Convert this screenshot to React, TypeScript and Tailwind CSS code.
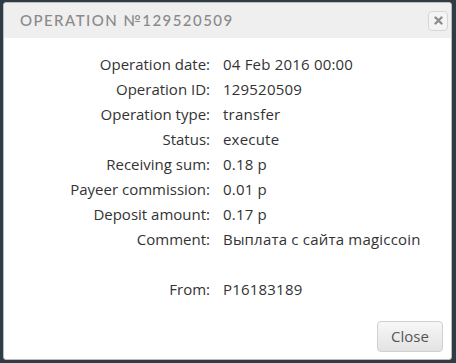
import React from "react";

const rows: [string, string][] = [
  ["Operation date:", "04 Feb 2016 00:00"],
  ["Operation ID:", "129520509"],
  ["Operation type:", "transfer"],
  ["Status:", "execute"],
  ["Receiving sum:", "0.18 р"],
  ["Payeer commission:", "0.01 р"],
  ["Deposit amount:", "0.17 р"],
  ["Comment:", "Выплата с сайта magiccoin"],
  ["", ""],
  ["From:", "P16183189"],
];

export default function App() {
  return (
    <div className="w-[456px] h-[363px] bg-[#2e3d45] pt-[2px] pl-[3px] pr-[4px] pb-[3px]">
      <div className="h-full bg-white rounded-[3px] border border-[#bcbcbc] flex flex-col overflow-hidden">
        <div className="h-[35px] bg-[#efefef] flex items-center justify-between pl-[16px] pr-[3px]">
          <span
            className="text-[15px] tracking-[1.45px] text-[#8a8a8a] font-medium"
            style={{ fontFamily: "'Lato', sans-serif" }}
          >
            OPERATION №129520509
          </span>
          <button className="w-[20px] h-[20px] rounded-[4px] border border-[#d6d6d6] bg-[#f4f4f4] flex items-center justify-center">
            <svg width="9" height="9" viewBox="0 0 9 9">
              <path d="M1.5 1.5 L7.5 7.5 M7.5 1.5 L1.5 7.5" stroke="#8c8c8c" strokeWidth="2.4" strokeLinecap="round" />
            </svg>
          </button>
        </div>
        <div
          className="grid grid-cols-[206px_1fr] gap-x-[13px] pt-[14px] text-[15px] text-[#333]"
          style={{ fontFamily: "'Open Sans', sans-serif" }}
        >
          {rows.map(([l, v], i) => (
            <React.Fragment key={i}>
              <div className="h-[25px] leading-[25px] text-right">{l}</div>
              <div className="h-[25px] leading-[25px] tracking-[0.2px]">{v}</div>
            </React.Fragment>
          ))}
        </div>
        <div className="flex-1" />
        <div className="flex justify-end pr-[8px] pb-[7px]">
          <button
            className="w-[66px] h-[31px] rounded-[4px] border border-[#d0d0d0] bg-gradient-to-b from-[#f7f7f7] to-[#e3e3e3] text-[15px] text-[#555]"
            style={{ fontFamily: "'Open Sans', sans-serif" }}
          >
            Close
          </button>
        </div>
      </div>
    </div>
  );
}
